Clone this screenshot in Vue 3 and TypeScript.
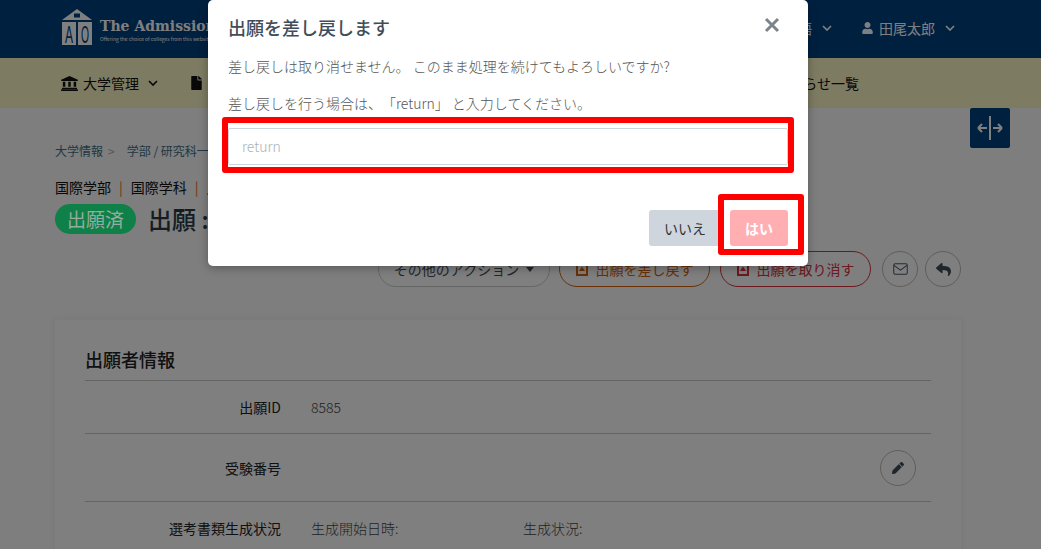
<script setup lang="ts">
const rows = [
  { label: '出願ID', value: '8585', tall: false },
  { label: '受験番号', value: '', tall: true },
]
</script>

<template>
  <div class="page">
    <header class="top">
      <div class="brand">
        <svg class="logo" viewBox="0 0 30 36" width="30" height="36">
          <path d="M15 0 L30 11 H0 Z" fill="#fff" />
          <rect x="12" y="4.5" width="6" height="4" fill="#004080" />
          <rect x="0" y="13" width="14" height="23" fill="#fff" />
          <rect x="16" y="13" width="14" height="23" fill="#fff" />
          <text x="7" y="33.5" class="logo-letter" text-anchor="middle" textLength="8" lengthAdjust="spacingAndGlyphs">A</text>
          <text x="23" y="33.5" class="logo-letter" text-anchor="middle" textLength="8" lengthAdjust="spacingAndGlyphs">O</text>
        </svg>
        <div class="brand-text">
          <div class="brand-name">The Admissions Office</div>
          <div class="brand-sub">Offering the choice of colleges from this website</div>
        </div>
      </div>
      <div class="top-right">
        <span class="top-item">日本語<svg class="chev" viewBox="0 0 10 6" width="10" height="6"><path d="M1 1l4 4 4-4" /></svg></span>
        <span class="top-item user">
          <svg viewBox="0 0 448 512" width="11" height="12"><path fill="#fff" d="M224 256c70.7 0 128-57.3 128-128S294.7 0 224 0 96 57.3 96 128s57.3 128 128 128zm89.6 32h-16.7c-22.2 10.2-46.9 16-72.9 16s-50.6-5.8-72.9-16h-16.7C60.2 288 0 348.2 0 422.4V464c0 26.5 21.5 48 48 48h352c26.5 0 48-21.5 48-48v-41.6c0-74.2-60.2-134.4-134.4-134.4z" /></svg>
          田尾太郎<svg class="chev" viewBox="0 0 10 6" width="10" height="6"><path d="M1 1l4 4 4-4" /></svg>
        </span>
      </div>
    </header>

    <nav class="nav">
      <span class="nav-item">
        <svg viewBox="0 0 20 18" width="17" height="15"><path fill="#111" d="M10 0 L20 4.5 V6 H0 V4.5 Z M2 7 H5 V13 H2 Z M8.5 7 H11.5 V13 H8.5 Z M15 7 H18 V13 H15 Z M1 14 H19 V15.5 H1 Z M0 16 H20 V18 H0 Z" /></svg>
        大学管理<svg class="chev dark" viewBox="0 0 10 6" width="10" height="6"><path d="M1 1l4 4 4-4" /></svg>
      </span>
      <span class="nav-item file">
        <svg viewBox="0 0 384 512" width="11" height="14"><path fill="#111" d="M224 136V0H24C10.7 0 0 10.7 0 24v464c0 13.3 10.7 24 24 24h336c13.3 0 24-10.7 24-24V160H248c-13.2 0-24-10.8-24-24zm160-14.1v6.1H256V0h6.1c6.4 0 12.5 2.5 17 7l97.9 98c4.5 4.5 7 10.6 7 16.9z" /></svg>
        出願管理
      </span>
      <span class="nav-item last">お知らせ一覧</span>
    </nav>

    <main class="content">
      <button class="toggle" type="button" aria-label="幅切替">
        <svg viewBox="0 0 30 30" width="30" height="30"><path d="M15 3v24M3 15h9M3 15l4-4M3 15l4 4M27 15h-9M27 15l-4-4M27 15l-4 4" /></svg>
      </button>

      <div class="crumbs">大学情報<i>&gt;</i>学部 / 研究科一覧</div>
      <div class="dept"><span>国際学部</span><b>|</b><span>国際学科</span><b>|</b><span>入試</span></div>
      <div class="title-row">
        <span class="badge">出願済</span>
        <h1>出願 : 8585</h1>
      </div>

      <div class="actions">
        <span class="pill plain">その他のアクション<em class="caret"></em></span>
        <span class="pill orange">
          <svg viewBox="0 0 12 14" width="12" height="14"><path d="M1 1h10v12H1z" fill="none" stroke="currentColor" stroke-width="2" /><path d="M6 4.5l3 4.5H3z" fill="currentColor" /></svg>
          出願を差し戻す
        </span>
        <span class="pill red">
          <svg viewBox="0 0 12 14" width="12" height="14"><path d="M1 1h10v12H1z" fill="none" stroke="currentColor" stroke-width="2" /><path d="M6 4.5l3 4.5H3z" fill="currentColor" /></svg>
          出願を取り消す
        </span>
        <span class="circle mail">
          <svg viewBox="0 0 16 13" width="15" height="12"><rect x=".7" y=".7" width="14.6" height="11.6" rx="1.4" fill="none" stroke="#4a5865" stroke-width="1.1" /><path d="M1 2.5l7 5.3 7-5.3" fill="none" stroke="#4a5865" stroke-width="1.1" /></svg>
        </span>
        <span class="circle back">
          <svg viewBox="0 0 512 512" width="15" height="15"><path fill="#3f4d5a" d="M8.309 189.836L184.313 37.851C199.719 24.546 224 35.347 224 56.015v80.053c160.629 1.839 288 34.032 288 186.258 0 61.441-39.581 122.309-83.333 154.132-13.653 9.931-33.111-2.533-28.077-18.631 45.344-145.012-21.507-183.51-176.59-185.742V360c0 20.7-24.3 31.453-39.687 18.164l-176.004-152c-11.071-9.562-11.086-26.753 0-36.328z" /></svg>
        </span>
      </div>

      <section class="card">
        <h2>出願者情報</h2>
        <div v-for="r in rows" :key="r.label" class="row" :class="{ tall: r.tall }">
          <div class="label">{{ r.label }}</div>
          <div class="value">{{ r.value }}</div>
          <span v-if="r.tall" class="circle edit">
            <svg viewBox="0 0 512 512" width="12" height="12"><path fill="#3f4d5a" d="M497.9 142.1l-46.1 46.1c-4.7 4.7-12.3 4.7-17 0l-111-111c-4.7-4.7-4.7-12.3 0-17l46.1-46.1c18.7-18.7 49.1-18.7 67.9 0l60.1 60.1c18.8 18.7 18.8 49.1 0 67.9zM284.2 99.8L21.6 362.4.4 483.9c-2.9 16.4 11.4 30.6 27.8 27.8l121.5-21.3 262.6-262.6c4.7-4.7 4.7-12.3 0-17l-111-111c-4.8-4.7-12.4-4.7-17.1 0z" /></svg>
          </span>
        </div>
        <div class="row last-row">
          <div class="label">選考書類生成状況</div>
          <div class="value gen"><span>生成開始日時:</span><span>生成状況:</span></div>
        </div>
      </section>
    </main>

    <div class="overlay"></div>

    <div class="modal">
      <div class="modal-head">
        <h3>出願を差し戻します</h3>
        <svg class="close" viewBox="0 0 16 16" width="16" height="16"><path d="M2 2l12 12M14 2L2 14" /></svg>
      </div>
      <p class="line first">差し戻しは取り消せません。 このまま処理を続けてもよろしいですか?</p>
      <p class="line">差し戻しを行う場合は、「return」 と入力してください。</p>
      <div class="field-wrap">
        <input class="field" type="text" placeholder="return" />
        <span class="mark mark-input"></span>
      </div>
      <div class="foot">
        <button class="btn no" type="button">いいえ</button>
        <div class="yes-wrap">
          <button class="btn yes" type="button">はい</button>
          <span class="mark mark-yes"></span>
        </div>
      </div>
    </div>
  </div>
</template>

<style>
html, body { margin: 0; padding: 0; background: #fff; overflow: hidden; }
</style>

<style scoped>
.page {
  position: relative;
  width: 1041px;
  height: 549px;
  overflow: hidden;
  background: #fcfcfc;
  color: #212529;
  font-family: "Noto Sans CJK JP", "Noto Sans", sans-serif;
  font-size: 14px;
  font-weight: 300;
  text-spacing-trim: space-all;
}
.top {
  height: 58px;
  background: #004080;
  display: flex;
  align-items: center;
  justify-content: space-between;
  padding: 0 86px 0 62px;
  color: #fff;
}
.brand { display: flex; align-items: flex-start; gap: 8px; height: 58px; box-sizing: border-box; padding-top: 9px; }
.logo { overflow: visible; }
.brand-text { margin-top: 8px; font-weight: 400; }
.logo-letter { font-family: "Liberation Sans", sans-serif; font-size: 23px; font-weight: 400; fill: #004080; }
.brand-name { font-family: "DejaVu Serif", serif; font-size: 14px; font-weight: 700; line-height: 18px; white-space: nowrap; }
.brand-sub { font-size: 5px; line-height: 8px; white-space: nowrap; }
.top-right { display: flex; align-items: center; gap: 30px; margin-top: -2px; }
.top-item { display: inline-flex; align-items: center; gap: 6px; font-size: 14px; font-weight: 400; }
.chev { margin-left: 4px; fill: none; stroke: #fff; stroke-width: 1.7; }
.chev.dark { stroke: #111; }
.nav {
  height: 50px;
  background: #fbf7c5;
  display: flex;
  align-items: center;
  padding: 0 182px 0 61px;
  color: #111;
  font-weight: 400;
}
.nav-item { display: inline-flex; align-items: center; gap: 5px; }
.nav-item.file { margin-left: 33px; }
.nav-item.last { margin-left: auto; }
.content { position: relative; padding: 33px 80px 0 55px; }
.toggle {
  position: absolute;
  top: 0;
  right: 31px;
  width: 40px;
  height: 40px;
  padding: 5px;
  border: 0;
  border-radius: 2px;
  background: #004080;
}
.toggle svg { fill: none; stroke: #fff; stroke-width: 2; display: block; }
.crumbs { font-size: 12px; line-height: 18px; color: #3f7086; margin-top: 1px; font-weight: 400; }
.crumbs i { font-style: normal; color: #aaa; margin: 0 12px 0 5px; }
.dept { margin-top: 18px; font-size: 14px; line-height: 18px; color: #111; display: flex; gap: 8px; font-weight: 400; }
.dept b { font-weight: 400; color: #e0701a; }
.title-row { display: flex; align-items: center; gap: 12px; margin-top: 8px; height: 30px; }
.badge {
  position: relative;
  z-index: 2;
  display: inline-block;
  width: 81px;
  height: 30px;
  line-height: 30px;
  border-radius: 15px;
  background: #0f8048;
  color: #94ad9f;
  font-size: 19px;
  font-weight: 400;
  text-align: center;
}
h1 { margin: -2px 0 0; font-size: 24px; font-weight: 500; color: #2b3a47; }
.actions {
  display: flex;
  justify-content: flex-end;
  align-items: center;
  margin: 17px 0 0;
  width: 906px;
}
.pill {
  height: 36px;
  box-sizing: border-box;
  border: 1px solid #ccc;
  border-radius: 18px;
  display: inline-flex;
  align-items: center;
  justify-content: center;
  gap: 8px;
  padding: 0 10px;
  font-size: 14px;
  font-weight: 400;
  white-space: nowrap;
  background: #fff;
}
.pill.plain { color: #3f4d5a; width: 172px; gap: 5px; }
.pill.orange { color: #d2620a; border-color: #d2620a; width: 151px; margin-left: 9px; }
.pill.red { color: #d8323f; border-color: #d8323f; width: 151px; margin-left: 10px; }
.caret { width: 0; height: 0; border: 4px solid transparent; border-top: 5px solid #3f4d5a; border-bottom: 0; margin-left: 2px; }
.circle {
  width: 36px;
  height: 36px;
  box-sizing: border-box;
  border: 1px solid #bbb;
  border-radius: 50%;
  display: inline-flex;
  align-items: center;
  justify-content: center;
  flex: none;
  background: #fff;
}
.circle.mail { margin-left: 11px; }
.circle.back { margin-left: 7px; }
.card {
  margin-top: 33px;
  width: 906px;
  box-sizing: border-box;
  padding: 27px 30px 0;
  background: #fff;
  box-shadow: 0 0 8px rgba(0, 0, 0, .06);
}
h2 { margin: 0; font-size: 18px; line-height: 24px; font-weight: 500; padding-bottom: 9px; border-bottom: 1px solid #c8c8c8; color: #222; }
.row { display: flex; align-items: center; height: 52px; border-bottom: 1px solid #c8c8c8; }
.row.tall { height: 67px; }
.last-row { border: 0; height: 52px; }
.label { width: 196px; text-align: right; color: #222; font-size: 14px; font-weight: 400; flex: none; }
.value { margin-left: 30px; color: #444; font-size: 14px; flex: 1; }
.gen { display: flex; }
.gen span:first-child { width: 212px; }
.edit { margin-right: 15px; }
.overlay { position: absolute; inset: 0; background: rgba(0, 0, 0, .5); z-index: 1; }
.modal {
  position: absolute;
  z-index: 3;
  left: 208px;
  top: 0;
  width: 600px;
  height: 266px;
  box-sizing: border-box;
  padding: 15px 20px 0;
  background: #fff;
  border-radius: 5px;
  box-shadow: 0 2px 10px rgba(0, 0, 0, .3);
}
.modal-head { display: flex; justify-content: space-between; align-items: flex-start; height: 24px; }
h3 { margin: 0; font-size: 18px; line-height: 24px; font-weight: 500; color: #3f4d5a; }
.close { margin: 2px 8px 0 0; fill: none; stroke: #7d858c; stroke-width: 3; }
.line { margin: 0; font-size: 14px; line-height: 20px; color: #555; white-space: nowrap; }
.line.first { margin-top: 17px; }
.line + .line { margin-top: 17px; }
.field-wrap { position: relative; margin-top: 15px; }
.field {
  display: block;
  width: 100%;
  height: 37px;
  box-sizing: border-box;
  border: 1px solid #ced4da;
  border-radius: 2px;
  padding: 0 13px 2px;
  font: inherit;
  outline: none;
}
.field::placeholder { color: #aab1b8; }
.mark {
  position: absolute;
  box-sizing: border-box;
  border: 6px solid #f00;
  border-radius: 3px;
  pointer-events: none;
}
.mark-input { left: -6px; right: -6px; top: -11px; bottom: -8px; }
.mark-yes { left: -12px; right: -16px; top: -16px; bottom: -9px; }
.foot { display: flex; justify-content: flex-end; gap: 8px; margin-top: 45px; }
.yes-wrap { position: relative; }
.btn { display: block; height: 36px; border: 0; border-radius: 3px; font: inherit; font-size: 14px; font-weight: 400; }
.btn.no { width: 74px; background: #ced5dd; color: #333; margin-right: -1px; padding-right: 8px; }
.btn.yes { width: 58px; background: #ffaeb2; color: #fff; font-weight: 700; }
</style>
